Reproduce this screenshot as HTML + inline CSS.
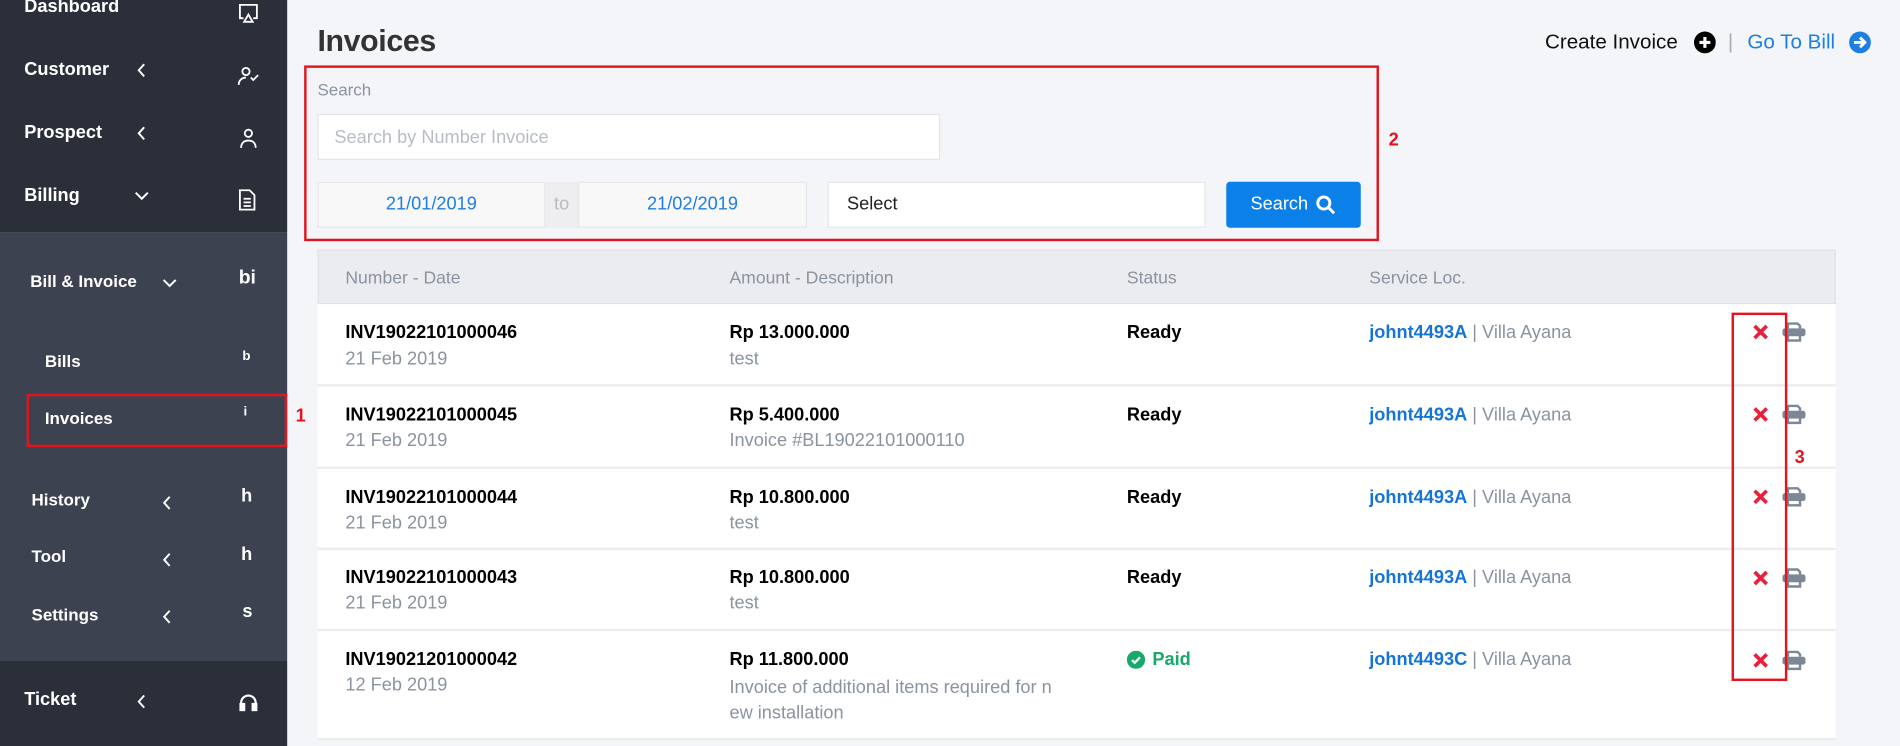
<!DOCTYPE html>
<html><head><meta charset="utf-8"><style>
html,body{margin:0;padding:0;width:1900px;height:746px;overflow:hidden;background:#f4f5f9}
#w{position:absolute;left:0;top:0;width:1568px;height:616px;transform:scale(1.21173);transform-origin:0 0;font-family:"Liberation Sans",sans-serif;background:#f4f5f9}
.a{position:absolute;white-space:nowrap}
.sb{position:absolute;left:0;width:237px}
.mi{position:absolute;color:#fff;font-weight:bold;font-size:15px}
.rb{position:absolute;border:2px solid #e3141d;box-sizing:border-box}
.rn{position:absolute;color:#e3141d;font-weight:bold;font-size:15px}
.row{position:absolute;left:262px;width:1253px;background:#fff;border-bottom:2px solid #ececec}
.b1{position:absolute;font-weight:bold;font-size:15px;color:#000}
.g1{position:absolute;font-size:15px;color:#8a93a0}
.hd{position:absolute;font-size:14.5px;color:#8a93a0;top:15px}
</style></head><body><div id="w">
<div class="sb" style="top:0;height:192px;background:#2b2f3a"></div>
<div class="sb" style="top:192px;height:353px;background:#3d4250"></div>
<div class="sb" style="top:545px;height:71px;background:#2b2f3a"></div>

<div class="mi" style="left:20px;top:-3px">Dashboard</div>
<svg class="a" style="left:196px;top:2px" width="18" height="18" viewBox="0 0 18 18" fill="none" stroke="#fff" stroke-width="1.5"><path d="M5 13H2V2h14v11h-3"/><path d="M9 10l-3.5 6h7z"/></svg>
<div class="mi" style="left:20px;top:49px">Customer</div>
<svg class="a" style="left:113px;top:52px" width="8" height="12" viewBox="0 0 8 12" fill="none" stroke="#fff" stroke-width="1.6"><path d="M6 1L1.5 6 6 11"/></svg>
<svg class="a" style="left:195px;top:53px" width="20" height="20" viewBox="0 0 20 20" fill="none" stroke="#fff" stroke-width="1.5"><circle cx="8" cy="6" r="3"/><path d="M2 17c0-4 3-6 6-6"/><path d="M12 11l2 2 4-4"/></svg>
<div class="mi" style="left:20px;top:101px">Prospect</div>
<svg class="a" style="left:113px;top:104px" width="8" height="12" viewBox="0 0 8 12" fill="none" stroke="#fff" stroke-width="1.6"><path d="M6 1L1.5 6 6 11"/></svg>
<svg class="a" style="left:196px;top:104px" width="18" height="20" viewBox="0 0 18 20" fill="none" stroke="#fff" stroke-width="1.5"><circle cx="9" cy="6" r="3"/><path d="M3 18c0-4 2.5-6 6-6s6 2 6 6"/></svg>
<div class="mi" style="left:20px;top:153px">Billing</div>
<svg class="a" style="left:110px;top:156px" width="14" height="12" viewBox="0 0 14 12" fill="none" stroke="#fff" stroke-width="1.6"><path d="M2 3l5 5 5-5"/></svg>
<svg class="a" style="left:196px;top:155px" width="16" height="20" viewBox="0 0 16 20" fill="none" stroke="#fff" stroke-width="1.5"><path d="M2 2h8l4 4v12H2z"/><path d="M5 9h6M5 12h6M5 15h6"/></svg>

<div class="mi" style="left:25px;top:224px;font-size:14px">Bill &amp; Invoice</div>
<svg class="a" style="left:133px;top:228px" width="14" height="12" viewBox="0 0 14 12" fill="none" stroke="#fff" stroke-width="1.6"><path d="M2 3l5 5 5-5"/></svg>
<div class="mi" style="left:197px;top:221px;font-size:16px">bi</div>
<div class="mi" style="left:37px;top:290px;font-size:14px">Bills</div>
<div class="mi" style="left:200px;top:288px;font-size:11px">b</div>
<div class="mi" style="left:37px;top:337px;font-size:14px">Invoices</div>
<div class="mi" style="left:201px;top:334px;font-size:11px">i</div>
<div class="rb" style="left:22px;top:325px;width:215px;height:44px"></div>
<div class="rn" style="left:244px;top:335px">1</div>
<div class="mi" style="left:26px;top:404px;font-size:14px">History</div><div class="mi" style="left:199px;top:401px;font-size:15px">h</div>
<div class="mi" style="left:26px;top:451px;font-size:14px">Tool</div><div class="mi" style="left:199px;top:449px;font-size:15px">h</div>
<div class="mi" style="left:26px;top:499px;font-size:14px">Settings</div><div class="mi" style="left:200px;top:496px;font-size:15px">s</div>
<svg class="a" style="left:134px;top:409px" width="8" height="12" viewBox="0 0 8 12" fill="none" stroke="#fff" stroke-width="1.6"><path d="M6 1L1.5 6 6 11"/></svg>
<svg class="a" style="left:134px;top:456px" width="8" height="12" viewBox="0 0 8 12" fill="none" stroke="#fff" stroke-width="1.6"><path d="M6 1L1.5 6 6 11"/></svg>
<svg class="a" style="left:134px;top:503px" width="8" height="12" viewBox="0 0 8 12" fill="none" stroke="#fff" stroke-width="1.6"><path d="M6 1L1.5 6 6 11"/></svg>
<div class="mi" style="left:20px;top:569px">Ticket</div>
<svg class="a" style="left:113px;top:573px" width="8" height="12" viewBox="0 0 8 12" fill="none" stroke="#fff" stroke-width="1.6"><path d="M6 1L1.5 6 6 11"/></svg>
<svg class="a" style="left:196px;top:571px" width="18" height="18" viewBox="0 0 18 18" fill="none" stroke="#fff" stroke-width="1.8"><path d="M3 13V9a6 6 0 0112 0v4"/><rect x="2.5" y="10" width="3" height="5" fill="#fff"/><rect x="12.5" y="10" width="3" height="5" fill="#fff"/></svg>

<div class="a" style="left:262px;top:20px;font-size:25px;font-weight:bold;color:#333;letter-spacing:-0.3px">Invoices</div>
<div class="a" style="left:1275px;top:25px;font-size:17px;color:#111">Create Invoice</div>
<svg class="a" style="left:1398px;top:26px" width="18" height="18" viewBox="0 0 18 18"><circle cx="9" cy="9" r="9" fill="#000"/><path d="M9 4.5v9M4.5 9h9" stroke="#fff" stroke-width="2.6"/></svg>
<div class="a" style="left:1426px;top:25px;font-size:17px;color:#aaa">|</div>
<div class="a" style="left:1442px;top:25px;font-size:17px;color:#1e7fe0">Go To Bill</div>
<svg class="a" style="left:1526px;top:26px" width="18" height="18" viewBox="0 0 18 18"><circle cx="9" cy="9" r="9" fill="#1e7fe0"/><path d="M4 9h9M9 5l4 4-4 4" stroke="#fff" stroke-width="2.4" fill="none"/></svg>

<div class="rb" style="left:251px;top:54px;width:887px;height:145px"></div>
<div class="rn" style="left:1146px;top:107px">2</div>
<div class="a" style="left:262px;top:66px;font-size:14px;color:#8a93a0">Search</div>
<div class="a" style="left:262px;top:94px;width:514px;height:38px;background:#fff;border:1px solid #e3e5e8;box-sizing:border-box"></div>
<div class="a" style="left:276px;top:105px;font-size:15px;color:#b8bcc4">Search by Number Invoice</div>
<div class="a" style="left:262px;top:150px;width:188px;height:38px;background:#f8f8f9;border:1px solid #e6e7ea;box-sizing:border-box;text-align:center;line-height:36px;font-size:15px;color:#1e7fe0">21/01/2019</div>
<div class="a" style="left:450px;top:150px;width:27px;height:38px;background:#eeeef0;text-align:center;line-height:38px;font-size:15px;color:#b8bcc4">to</div>
<div class="a" style="left:477px;top:150px;width:189px;height:38px;background:#f8f8f9;border:1px solid #e6e7ea;box-sizing:border-box;text-align:center;line-height:36px;font-size:15px;color:#1e7fe0">21/02/2019</div>
<div class="a" style="left:683px;top:150px;width:312px;height:38px;background:#fff;border:1px solid #e3e5e8;box-sizing:border-box;line-height:36px;padding-left:15px;font-size:15px;color:#222">Select</div>
<div class="a" style="left:1012px;top:150px;width:111px;height:38px;background:#0a80e8;border-radius:3px;color:#fff;font-size:15px;line-height:38px;padding-left:20px;box-sizing:border-box">Search</div>
<svg class="a" style="left:1085px;top:160px" width="18" height="18" viewBox="0 0 18 18" fill="none" stroke="#fff" stroke-width="2.4"><circle cx="7.5" cy="7.5" r="5"/><path d="M11 11l5 5"/></svg>

<div class="a" style="left:262px;top:206px;width:1253px;height:45px;background:#ebecef;border:1px solid #e0e1e4;box-sizing:border-box">
<div class="hd" style="left:22px">Number - Date</div><div class="hd" style="left:339px">Amount - Description</div><div class="hd" style="left:667px">Status</div><div class="hd" style="left:867px">Service Loc.</div></div>

<div class="row" style="top:251px;height:66px"><div class="b1" style="left:23px;top:15px">INV19022101000046</div><div class="g1" style="left:23px;top:37px">21 Feb 2019</div><div class="b1" style="left:340px;top:15px">Rp 13.000.000</div><div class="g1" style="left:340px;top:37px">test</div><div class="b1" style="left:668px;top:15px">Ready</div><div class="g1" style="left:868px;top:15px"><b style="color:#1574d8">johnt4493A</b> | Villa Ayana</div></div>
<div class="row" style="top:319px;height:66px"><div class="b1" style="left:23px;top:15px">INV19022101000045</div><div class="g1" style="left:23px;top:36px">21 Feb 2019</div><div class="b1" style="left:340px;top:15px">Rp 5.400.000</div><div class="g1" style="left:340px;top:36px">Invoice #BL19022101000110</div><div class="b1" style="left:668px;top:15px">Ready</div><div class="g1" style="left:868px;top:15px"><b style="color:#1574d8">johnt4493A</b> | Villa Ayana</div></div>
<div class="row" style="top:387px;height:65px"><div class="b1" style="left:23px;top:15px">INV19022101000044</div><div class="g1" style="left:23px;top:36px">21 Feb 2019</div><div class="b1" style="left:340px;top:15px">Rp 10.800.000</div><div class="g1" style="left:340px;top:36px">test</div><div class="b1" style="left:668px;top:15px">Ready</div><div class="g1" style="left:868px;top:15px"><b style="color:#1574d8">johnt4493A</b> | Villa Ayana</div></div>
<div class="row" style="top:454px;height:65px"><div class="b1" style="left:23px;top:14px">INV19022101000043</div><div class="g1" style="left:23px;top:35px">21 Feb 2019</div><div class="b1" style="left:340px;top:14px">Rp 10.800.000</div><div class="g1" style="left:340px;top:35px">test</div><div class="b1" style="left:668px;top:14px">Ready</div><div class="g1" style="left:868px;top:14px"><b style="color:#1574d8">johnt4493A</b> | Villa Ayana</div></div>
<div class="row" style="top:521px;height:88px"><div class="b1" style="left:23px;top:15px">INV19021201000042</div><div class="g1" style="left:23px;top:36px">12 Feb 2019</div><div class="b1" style="left:340px;top:15px">Rp 11.800.000</div><div class="g1" style="left:340px;top:36px;line-height:21px">Invoice of additional items required for n<br>ew installation</div>
<svg class="a" style="left:668px;top:16px" width="15" height="15" viewBox="0 0 16 16"><circle cx="8" cy="8" r="8" fill="#17a86b"/><path d="M4.5 8.2l2.4 2.4 4.6-4.8" stroke="#fff" stroke-width="2" fill="none"/></svg>
<div class="b1" style="left:689px;top:15px;color:#17a86b">Paid</div><div class="g1" style="left:868px;top:15px"><b style="color:#1574d8">johnt4493C</b> | Villa Ayana</div></div>

<div id="icons"></div>
<div class="rb" style="left:1429px;top:258px;width:46px;height:304px"></div>
<div class="rn" style="left:1481px;top:369px">3</div>
</div>
<script>
var ys=[274,342,410,477,545],h='';
ys.forEach(function(y){h+='<svg class="a" style="left:1446px;top:'+(y-7)+'px" width="14" height="14" viewBox="0 0 14 14"><path d="M2 2l10 10M12 2L2 12" stroke="#e8203c" stroke-width="3"/></svg><svg class="a" style="left:1470px;top:'+(y-9)+'px" width="21" height="18" viewBox="0 0 21 18"><path d="M5.5 6V2h8l2 2v2" fill="none" stroke="#7d8795" stroke-width="2"/><rect x="1" y="6" width="19" height="6.5" rx="2" fill="#7d8795"/><path d="M5.5 11v5h10v-5" fill="none" stroke="#7d8795" stroke-width="2"/></svg>'});
document.getElementById('icons').outerHTML=h;
</script>
</body></html>
